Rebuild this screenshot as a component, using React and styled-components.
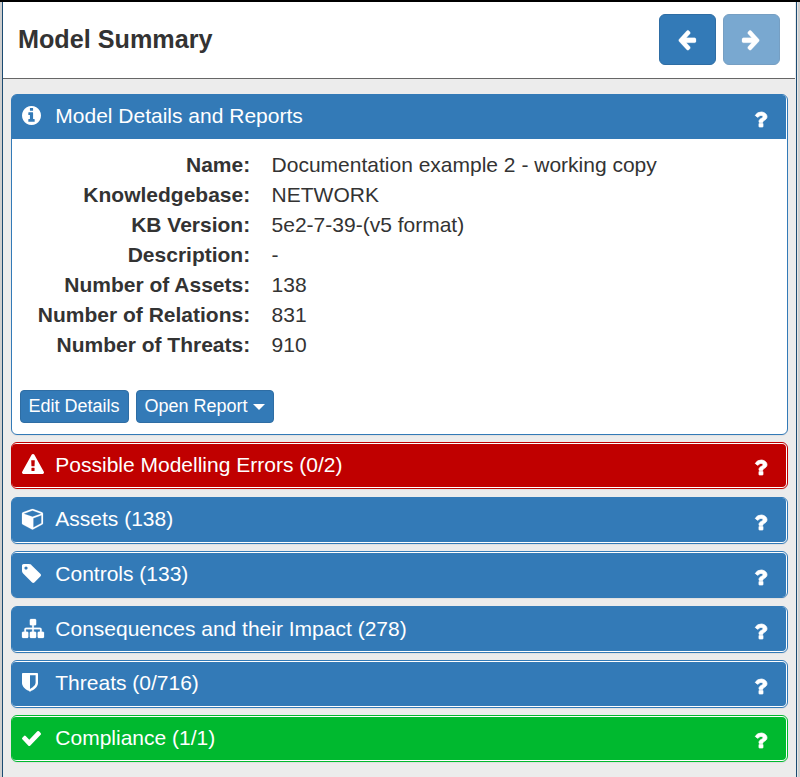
import React from "react";
import styled, { createGlobalStyle } from "styled-components";

const Global = createGlobalStyle`
  * { box-sizing: border-box; }
  body { margin: 0; background: #ececec; font-family: "Liberation Sans", Arial, sans-serif; font-size: 21px; line-height: 30px; color: #333; }
`;

const Frame = styled.div`
  height: 777px;
  display: flex;
  border-top: 2px solid #000;
  overflow: hidden;
`;
const Edge = styled.div`
  flex: 0 0 ${(p) => p.$w}px;
  background: ${(p) => p.$bg};
`;
const Pane = styled.main`
  flex: 1;
  min-width: 0;
  background: #ececec;
`;
const TopBar = styled.header`
  height: 77px;
  padding: 12px 15px 0 15px;
  display: flex;
  justify-content: space-between;
  background: #fff;
  border-bottom: 1px solid #666;
`;
const Title = styled.h1`
  margin: 7px 0 0;
  font-size: 25.2px;
  line-height: 36px;
  font-weight: bold;
`;
const NavButtons = styled.div`
  display: flex;
  gap: 7px;
`;
const NavButton = styled.button`
  width: 57px;
  height: 51px;
  padding: 0 1px 0 0;
  display: flex;
  align-items: center;
  justify-content: center;
  color: #fff;
  background: #337ab7;
  border: 1px solid #2e6da4;
  border-radius: 6px;
  opacity: ${(p) => (p.disabled ? 0.65 : 1)};
`;
const Panels = styled.div`
  padding: 15px 7px 0 8px;
`;
const Panel = styled.section`
  height: ${(p) => p.$height}px;
  margin-bottom: ${(p) => p.$gap}px;
  padding: ${(p) => p.$inset};
  background: #fff;
  border: 1px solid ${(p) => p.$color};
  border-radius: 6px;
  box-shadow: 0 1px 1px rgba(0, 0, 0, 0.05);
`;
const PanelHeader = styled.div`
  height: ${(p) => (p.$open ? "44px" : "100%")};
  padding: 0 19px 0 10px;
  display: flex;
  color: #fff;
  background: ${(p) => p.$color};
  border-radius: ${(p) => (p.$open ? "4px 4px 0 0" : "4px")};
`;
const IconSlot = styled.span`
  width: 33.3px;
  padding-top: ${(p) => p.$top}px;
  line-height: 0;
`;
const PanelTitle = styled.h2`
  flex: 1;
  margin: 0;
  padding-top: ${(p) => p.$top}px;
  font-size: 21px;
  line-height: 30px;
  font-weight: normal;
`;
const HelpSlot = styled.span`
  padding-top: ${(p) => p.$top}px;
  line-height: 0;
`;
const Details = styled.dl`
  margin: 11px 0 0;
  display: grid;
  grid-template-columns: 238.2px 1fr;
  column-gap: 21.4px;
`;
const Term = styled.dt`
  text-align: right;
  font-weight: bold;
`;
const Value = styled.dd`
  margin: 0;
`;
const Actions = styled.div`
  margin: 30px 0 0 8px;
  display: flex;
  gap: 7px;
`;
const ActionButton = styled.button`
  width: ${(p) => p.$width}px;
  height: 33px;
  padding: 0 1px 0 0;
  display: flex;
  align-items: center;
  justify-content: center;
  gap: 5px;
  font: 18px "Liberation Sans", Arial, sans-serif;
  white-space: nowrap;
  color: #fff;
  background: #337ab7;
  border: 1px solid #2e6da4;
  border-radius: 4px;
`;
const Caret = styled.i`
  margin-top: 1px;
  border-top: 6px solid #fff;
  border-left: 6px solid transparent;
  border-right: 6px solid transparent;
`;

const paths = {
  info: "M1152 1376v-160q0-14-9-23t-23-9h-96v-512q0-14-9-23t-23-9h-320q-14 0-23 9t-9 23v160q0 14 9 23t23 9h96v320h-96q-14 0-23 9t-9 23v160q0 14 9 23t23 9h448q14 0 23-9t9-23zm-128-896v-160q0-14-9-23t-23-9h-192q-14 0-23 9t-9 23v160q0 14 9 23t23 9h192q14 0 23-9t9-23zm640 416q0 209-103 385.5t-279.5 279.5-385.5 103-385.5-103-279.5-279.5-103-385.5 103-385.5 279.5-279.5 385.5-103 385.5 103 279.5 279.5 103 385.5z",
  warning: "M1024 1375v-190q0-14-9.5-23.5t-22.5-9.5h-192q-13 0-22.5 9.5t-9.5 23.5v190q0 14 9.5 23.5t22.5 9.5h192q13 0 22.5-9.5t9.5-23.5zm-2-374l18-459q0-12-10-19-13-11-24-11h-220q-11 0-24 11-10 7-10 21l17 457q0 10 10 16.5t24 6.5h185q14 0 23.5-6.5t10.5-16.5zm-14-934l768 1408q35 63-2 126-17 29-46.5 46t-63.5 17h-1536q-34 0-63.5-17t-46.5-46q-37-63-2-126l768-1408q17-31 47-49t65-18 65 18 47 49z",
  cube: "M896 1629l640-349v-636l-640 233v752zm-64-865l698-254-698-254-698 254zm832-252v768q0 35-18 65t-49 47l-704 384q-28 16-61 16t-61-16l-704-384q-31-17-49-47t-18-65v-768q0-40 23-73t61-47l704-256q22-8 44-8t44 8l704 256q38 14 61 47t23 73z",
  tag: "M576 448q0-53-37.5-90.5t-90.5-37.5-90.5 37.5-37.5 90.5 37.5 90.5 90.5 37.5 90.5-37.5 37.5-90.5zm1067 576q0 53-37 90l-491 492q-39 37-91 37-53 0-90-37l-715-716q-38-37-64.5-101t-26.5-117v-416q0-52 38-90t90-38h416q53 0 117 26.5t102 64.5l715 714q37 39 37 91z",
  sitemap: "M1792 1248v320q0 40-28 68t-68 28h-320q-40 0-68-28t-28-68v-320q0-40 28-68t68-28h96v-192h-512v192h96q40 0 68 28t28 68v320q0 40-28 68t-68 28h-320q-40 0-68-28t-28-68v-320q0-40 28-68t68-28h96v-192h-512v192h96q40 0 68 28t28 68v320q0 40-28 68t-68 28h-320q-40 0-68-28t-28-68v-320q0-40 28-68t68-28h96v-192q0-52 38-90t90-38h512v-192h-96q-40 0-68-28t-28-68v-320q0-40 28-68t68-28h320q40 0 68 28t28 68v320q0 40-28 68t-68 28h-96v192h512q52 0 90 38t38 90v192h96q40 0 68 28t28 68z",
  shield: "M1344 960v-640h-448v1137q119-63 213-137 235-184 235-360zm192-768v768q0 86-33.5 170.5t-83 150-118 127.5-126.5 103-121 77.5-89.5 49.5-42.5 20q-12 6-26 6t-26-6q-16-7-42.5-20t-89.5-49.5-121-77.5-126.5-103-118-127.5-83-150-33.5-170.5v-768q0-26 19-45t45-19h1152q26 0 45 19t19 45z",
  check: "M1671 566q0 40-28 68l-724 724-136 136q-28 28-68 28t-68-28l-136-136-362-362q-28-28-28-68t28-68l136-136q28-28 68-28t68 28l294 295 656-657q28-28 68-28t68 28l136 136q28 28 28 68z",
  question: "M1088 1256v240q0 16-12 28t-28 12h-240q-16 0-28-12t-12-28v-240q0-16 12-28t28-12h240q16 0 28 12t12 28zm316-600q0 54-15.5 101t-35 76.5-55 59.5-57.5 43.5-61 35.5q-41 23-68.5 65t-27.5 67q0 17-12 32.5t-28 15.5h-240q-15 0-25.5-18.5t-10.5-37.5v-45q0-83 65-156.5t143-108.5q59-27 84-56t25-76q0-42-46.5-74t-107.5-32q-65 0-108 29-35 25-107 115-13 16-31 16-12 0-25-8l-164-125q-13-10-15.5-25t5.5-28q160-266 464-266 80 0 161 31t146 83 106 127.5 41 158.5z",
  left: "M1664 896v128q0 53-32.5 90.5t-84.5 37.5h-704l293 294q38 36 38 90t-38 90l-75 76q-37 37-90 37-52 0-91-37l-651-652q-37-37-37-90 0-52 37-91l651-650q38-38 91-38 52 0 90 38l75 74q38 38 38 91t-38 91l-293 293h704q52 0 84.5 37.5t32.5 90.5z",
};

const Svg = styled.svg`
  display: block;
  overflow: visible;
  width: ${(p) => p.$w}px;
  height: ${(p) => p.$h}px;
  fill: currentColor;
  stroke: currentColor;
  stroke-width: ${(p) => p.$stroke};
  stroke-linejoin: round;
  transform: ${(p) => (p.$flip ? "scaleX(-1)" : "none")};
`;

/* Each viewBox is trimmed to the drawn bounds of its glyph. */
const glyphs = {
  info: { box: "128 128 1536 1536", w: 19, h: 19, stroke: 0 },
  warning: { box: "0 0 1792 1664", w: 22, h: 20, stroke: 0 },
  cube: { box: "0 128 1664 1664", w: 21, h: 20.5, stroke: 15 },
  tag: { box: "128 128 1516 1516", w: 19, h: 19, stroke: 0 },
  sitemap: { box: "0 128 1792 1536", w: 22, h: 19, stroke: 20 },
  shield: { box: "256 128 1280 1536", w: 16, h: 18.5, stroke: 0 },
  check: { box: "121 334 1550 1188", w: 19, h: 15, stroke: 0 },
  question: { box: "455 256 949 1280", w: 12, h: 15, stroke: 60 },
  left: { box: "128 154 1536 1485", w: 18, h: 19, stroke: 20 },
};

function Icon({ name, flip }) {
  const g = glyphs[name];
  return (
    <Svg viewBox={g.box} preserveAspectRatio="none" $w={g.w} $h={g.h} $stroke={g.stroke} $flip={flip} aria-hidden="true">
      <path d={paths[name]} />
    </Svg>
  );
}

const BLUE = "#337ab7";
const details = [
  ["Name:", "Documentation example 2 - working copy"],
  ["Knowledgebase:", "NETWORK"],
  ["KB Version:", "5e2-7-39-(v5 format)"],
  ["Description:", "-"],
  ["Number of Assets:", "138"],
  ["Number of Relations:", "831"],
  ["Number of Threats:", "910"],
];
const sections = [
  { title: "Possible Modelling Errors (0/2)", icon: "warning", color: "#c00000", height: 47, gap: 8, inset: "1px 1px 1px 0", iconTop: 10, textTop: 6, helpTop: 16 },
  { title: "Assets (138)", icon: "cube", color: BLUE, height: 47, gap: 7, inset: "0 1px 1px 0", iconTop: 11, textTop: 6, helpTop: 17 },
  { title: "Controls (133)", icon: "tag", color: BLUE, height: 47, gap: 8, inset: "1px 1px 0 0", iconTop: 11, textTop: 6, helpTop: 17 },
  { title: "Consequences and their Impact (278)", icon: "sitemap", color: BLUE, height: 47, gap: 7, inset: "0 1px 1px 0", iconTop: 12, textTop: 7, helpTop: 17 },
  { title: "Threats (0/716)", icon: "shield", color: BLUE, height: 48, gap: 7, inset: "1px 1px 1px 0", iconTop: 11, textTop: 6, helpTop: 17 },
  { title: "Compliance (1/1)", icon: "check", color: "#00b92f", height: 47, gap: 0, inset: "1px 1px 1px 0", iconTop: 14, textTop: 6, helpTop: 16 },
];

export default function App() {
  return (
    <>
      <Global />
      <Frame>
        <Edge $w={2} $bg="#cfcfcf" />
        <Edge $w={1} $bg="#1b4b72" />
        <Pane>
          <TopBar>
            <Title>Model Summary</Title>
            <NavButtons>
              <NavButton aria-label="Back"><Icon name="left" /></NavButton>
              <NavButton aria-label="Forward" disabled><Icon name="left" flip /></NavButton>
            </NavButtons>
          </TopBar>
          <Panels>
            <Panel $color={BLUE} $height={341} $gap={7} $inset="0 1px 0 0">
              <PanelHeader $color={BLUE} $open>
                <IconSlot $top={11}><Icon name="info" /></IconSlot>
                <PanelTitle $top={6}>Model Details and Reports</PanelTitle>
                <HelpSlot $top={17}><Icon name="question" /></HelpSlot>
              </PanelHeader>
              <Details>
                {details.map(([term, value]) => (
                  <React.Fragment key={term}>
                    <Term>{term}</Term>
                    <Value>{value}</Value>
                  </React.Fragment>
                ))}
              </Details>
              <Actions>
                <ActionButton $width={109}>Edit Details</ActionButton>
                <ActionButton $width={138}>Open Report<Caret /></ActionButton>
              </Actions>
            </Panel>
            {sections.map((s) => (
              <Panel key={s.title} $color={s.color} $height={s.height} $gap={s.gap} $inset={s.inset}>
                <PanelHeader $color={s.color}>
                  <IconSlot $top={s.iconTop}><Icon name={s.icon} /></IconSlot>
                  <PanelTitle $top={s.textTop}>{s.title}</PanelTitle>
                  <HelpSlot $top={s.helpTop}><Icon name="question" /></HelpSlot>
                </PanelHeader>
              </Panel>
            ))}
          </Panels>
        </Pane>
        <Edge $w={1} $bg="#ececec" />
        <Edge $w={1} $bg="#1b4b72" />
        <Edge $w={1} $bg="#e6e6e6" />
        <Edge $w={2} $bg="#cfcfcf" />
      </Frame>
    </>
  );
}
